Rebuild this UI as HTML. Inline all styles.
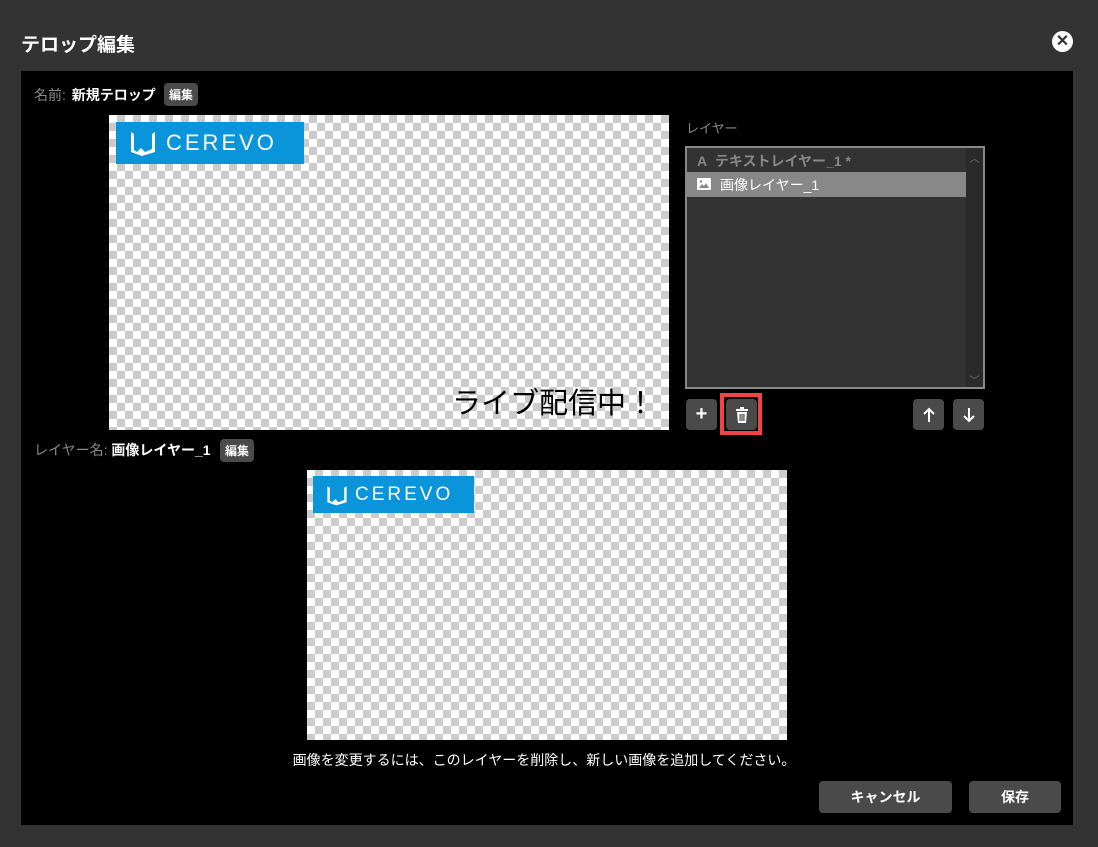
<!DOCTYPE html>
<html><head><meta charset="utf-8"><style>
*{margin:0;padding:0;box-sizing:border-box}
body{width:1098px;height:847px;background:#333;font-family:"Liberation Sans","Noto Sans CJK JP",sans-serif;position:relative;overflow:hidden;color:#fff}
.abs{position:absolute}
.chk{background-color:#fff;background-image:linear-gradient(45deg,#ccc 25%,transparent 25%,transparent 75%,#ccc 75%),linear-gradient(45deg,#ccc 25%,transparent 25%,transparent 75%,#ccc 75%);background-size:16px 16px;background-position:0 0,8px 8px}
.logo{background:#0a94d9;display:flex;align-items:center;color:#fff;font-weight:normal;letter-spacing:3px}
.btn{background:#4a4a4a;border-radius:4px;display:flex;align-items:center;justify-content:center}
.tag{background:#4a4a4a;border-radius:4px;font-size:12px;padding:3px 5px;font-weight:bold}
</style></head><body>
<div class="abs" style="left:21px;top:30px;font-size:19px;font-weight:bold">テロップ編集</div>
<div class="abs" style="left:1052px;top:31px;width:21px;height:21px;border-radius:50%;background:#fff;color:#333;font-size:16px;font-weight:bold;text-align:center;line-height:21px">✕</div>
<div class="abs" style="left:21px;top:71px;width:1052px;height:754px;background:#000"></div>
<div class="abs" style="left:34px;top:85px;font-size:14px;color:#888">名前: <b style="color:#fff;margin-left:2px">新規テロップ</b></div>
<div class="abs tag" style="left:164px;top:83px">編集</div>
<div class="abs chk" style="left:109px;top:115px;width:560px;height:315px"></div>
<div class="abs logo" style="left:116px;top:122px;width:188px;height:42px;font-size:22px"><svg width="30" height="28" style="margin:0 8px 0 12px" viewBox="0 0 30 28"><path d="M3 3v20l11 4 13-4V3l-3 2v15l-7 3-4-4-4 4-3-2V5z" fill="#fff"/></svg>CEREVO</div>
<div class="abs" style="left:452px;top:380px;font-size:29px;color:#000">ライブ配信中！</div>
<div class="abs" style="left:686px;top:118px;font-size:13px;color:#888">レイヤー</div>
<div class="abs" style="left:685px;top:146px;width:300px;height:243px;border:2px solid #888;background:#333"></div>
<div class="abs" style="left:966px;top:148px;width:17px;height:239px;background:#2a2a2a"></div>
<div class="abs" style="left:966px;top:150px;width:17px;font-size:10px;color:#777;text-align:center">︿</div>
<div class="abs" style="left:966px;top:372px;width:17px;font-size:10px;color:#777;text-align:center">﹀</div>
<div class="abs" style="left:697px;top:151px;font-size:14px;color:#888;font-weight:bold">A&nbsp; テキストレイヤー_1 *</div>
<div class="abs" style="left:687px;top:172px;width:279px;height:25px;background:#888"></div>
<svg class="abs" style="left:697px;top:178px" width="14" height="12" viewBox="0 0 14 12"><rect width="14" height="12" rx="1" fill="#fff"/><path d="M2 10l3-4 2 2 2-3 3 5z" fill="#888"/><circle cx="4" cy="3.5" r="1.2" fill="#888"/></svg>
<div class="abs" style="left:720px;top:175px;font-size:14px">画像レイヤー_1</div>
<div class="abs btn" style="left:686px;top:399px;width:31px;height:31px;font-size:20px;font-weight:bold">+</div>
<div class="abs" style="left:720px;top:393px;width:42px;height:42px;border:4px solid #f24444"></div>
<div class="abs btn" style="left:726px;top:399px;width:31px;height:31px"><svg width="14" height="16" viewBox="0 0 14 16"><path d="M1 2h12v2H1zM5 0h4v2H5zM2 5h10l-1 11H3zM4.5 7v7h1.2V7zM6.4 7v7h1.2V7zM8.3 7v7h1.2V7z" fill="#fff" fill-rule="evenodd"/></svg></div>
<div class="abs btn" style="left:913px;top:399px;width:31px;height:31px"><svg width="14" height="16" viewBox="0 0 14 16"><path d="M7 15V2M2 7l5-5 5 5" stroke="#fff" stroke-width="2" fill="none"/></svg></div>
<div class="abs btn" style="left:953px;top:399px;width:31px;height:31px"><svg width="14" height="16" viewBox="0 0 14 16"><path d="M7 1v13M2 9l5 5 5-5" stroke="#fff" stroke-width="2" fill="none"/></svg></div>
<div class="abs" style="left:34px;top:440px;font-size:14px;color:#888">レイヤー名: <b style="color:#fff">画像レイヤー_1</b></div>
<div class="abs tag" style="left:220px;top:439px">編集</div>
<div class="abs chk" style="left:307px;top:470px;width:480px;height:270px"></div>
<div class="abs logo" style="left:313px;top:476px;width:161px;height:37px;font-size:19px"><svg width="24" height="24" style="margin:0 6px 0 12px" viewBox="0 0 30 28"><path d="M3 3v20l11 4 13-4V3l-3 2v15l-7 3-4-4-4 4-3-2V5z" fill="#fff"/></svg>CEREVO</div>
<div class="abs" style="left:0;width:1088px;top:750px;text-align:center;font-size:14px">画像を変更するには、このレイヤーを削除し、新しい画像を追加してください。</div>
<div class="abs btn" style="left:819px;top:781px;width:133px;height:32px;font-size:14px;font-weight:bold">キャンセル</div>
<div class="abs btn" style="left:969px;top:781px;width:92px;height:32px;font-size:14px;font-weight:bold">保存</div>
</body></html>
